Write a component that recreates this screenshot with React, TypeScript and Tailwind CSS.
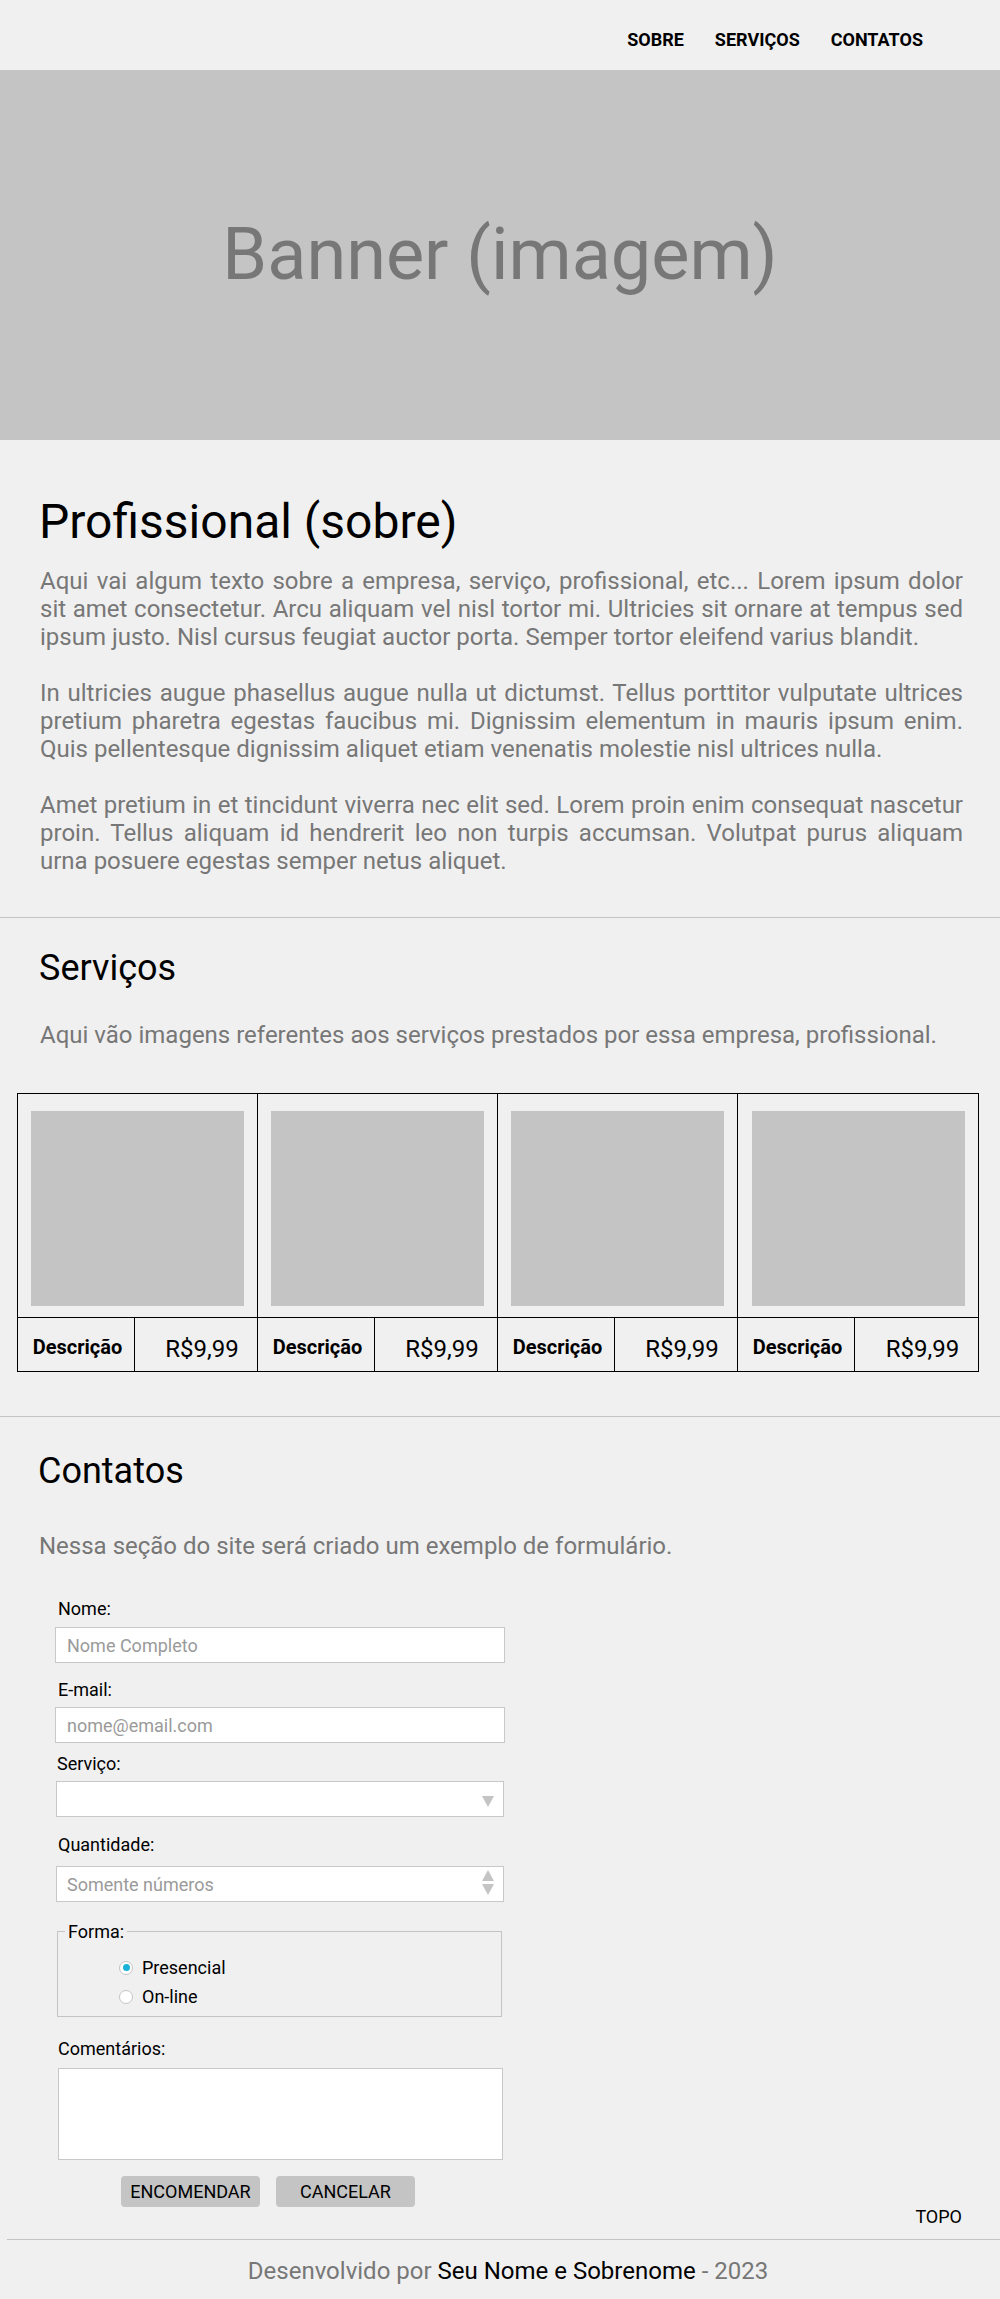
const CARDS = [1, 2, 3, 4];

const PARAGRAPHS = [
  "Aqui vai algum texto sobre a empresa, serviço, profissional, etc... Lorem ipsum dolor sit amet consectetur. Arcu aliquam vel nisl tortor mi. Ultricies sit ornare at tempus sed ipsum justo. Nisl cursus feugiat auctor porta. Semper tortor eleifend varius blandit.",
  "In ultricies augue phasellus augue nulla ut dictumst. Tellus porttitor vulputate ultrices pretium pharetra egestas faucibus mi. Dignissim elementum in mauris ipsum enim. Quis pellentesque dignissim aliquet etiam venenatis molestie nisl ultrices nulla.",
  "Amet pretium in et tincidunt viverra nec elit sed. Lorem proin enim consequat nascetur proin. Tellus aliquam id hendrerit leo non turpis accumsan. Volutpat purus aliquam urna posuere egestas semper netus aliquet.",
];

function Triangle({ up = false }: { up?: boolean }) {
  return (
    <svg width="12" height="11" viewBox="0 0 12 11" className="block">
      {up ? <polygon points="6,0 12,11 0,11" fill="#c4c4c4" /> : <polygon points="0,0 12,0 6,11" fill="#c4c4c4" />}
    </svg>
  );
}

export default function App() {
  return (
    <div className="min-h-[2299px] bg-[#f0f0f0] font-['Roboto','Liberation_Sans',sans-serif] text-black">
      <header className="flex h-[70px] justify-end gap-[31px] pr-[77px] pt-[29px] text-[18px] font-bold leading-[21px]">
        <a href="#sobre">SOBRE</a>
        <a href="#servicos">SERVIÇOS</a>
        <a href="#contatos">CONTATOS</a>
      </header>

      <div className="flex h-[370px] items-center justify-center bg-[#c4c4c4] text-[72px] leading-[84px] text-[#777]">
        Banner (imagem)
      </div>

      <section id="sobre" className="border-b border-[#c4c4c4] pb-[42px] pl-[39px] pr-[37px] pt-[54px]">
        <h1 className="text-[48px] leading-[56px]">Profissional (sobre)</h1>
        <div className="mt-[17px] space-y-[28px] pl-[1px] text-justify text-[24px] leading-[28px] text-[#777]">
          {PARAGRAPHS.map((p, i) => (
            <p key={i}>{p}</p>
          ))}
        </div>
      </section>

      <section id="servicos" className="border-b border-[#c4c4c4] pb-[44px] pt-[29px]">
        <h2 className="pl-[39px] text-[36px] leading-[42px]">Serviços</h2>
        <p className="mt-[32px] pl-[40px] text-[24px] leading-[28px] text-[#777]">
          Aqui vão imagens referentes aos serviços prestados por essa empresa, profissional.
        </p>

        <div className="ml-[17px] mt-[44px] grid w-[962px] grid-cols-4 border border-black">
          {CARDS.map((c) => (
            <div key={c} className="border-r border-black last:border-r-0">
              <div className="flex justify-center pb-[11px] pt-[17px]">
                <div className="h-[195px] w-[213px] bg-[#c4c4c4]" />
              </div>
              <div className="flex h-[54px] border-t border-black">
                <div className="flex w-[117px] items-center justify-center border-r border-black pl-[3px] pt-[5px] text-[20px] font-bold">
                  Descrição
                </div>
                <div className="flex flex-1 items-center justify-center pl-[12px] pt-[9px] text-[24px]">R$9,99</div>
              </div>
            </div>
          ))}
        </div>
      </section>

      <section id="contatos" className="pt-[33px]">
        <h2 className="pl-[38px] text-[36px] leading-[42px]">Contatos</h2>
        <p className="mt-[40px] pl-[39px] text-[24px] leading-[28px] text-[#777]">
          Nessa seção do site será criado um exemplo de formulário.
        </p>

        <form className="mt-[38px] pl-[55px] text-[18px] leading-[21px]" onSubmit={(e) => e.preventDefault()}>
          <label className="block pl-[3px]">Nome:</label>
          <input
            className="mt-[8px] block h-[36px] w-[450px] border border-[#c8c8c8] bg-white px-[11px] text-[18px] outline-none placeholder:text-[#9a9a9a]"
            placeholder="Nome Completo"
          />

          <label className="mt-[16px] block pl-[3px]">E-mail:</label>
          <input
            className="mt-[7px] block h-[36px] w-[450px] border border-[#c8c8c8] bg-white px-[11px] text-[18px] outline-none placeholder:text-[#9a9a9a]"
            placeholder="nome@email.com"
          />

          <label className="mt-[10px] block pl-[2px]">Serviço:</label>
          <div className="relative ml-[1px] mt-[7px] h-[36px] w-[448px] border border-[#c8c8c8] bg-white">
            <select className="h-full w-full appearance-none bg-transparent px-[11px] outline-none" defaultValue="">
              <option value=""></option>
            </select>
            <div className="pointer-events-none absolute right-[9px] top-[14px]">
              <Triangle />
            </div>
          </div>

          <label className="mt-[17px] block pl-[3px]">Quantidade:</label>
          <div className="relative ml-[1px] mt-[11px] h-[36px] w-[448px] border border-[#c8c8c8] bg-white">
            <input
              className="h-full w-full bg-transparent px-[10px] text-[18px] outline-none placeholder:text-[#9a9a9a]"
              placeholder="Somente números"
            />
            <div className="pointer-events-none absolute right-[9px] top-[3px] flex flex-col gap-[3px]">
              <Triangle up />
              <Triangle />
            </div>
          </div>

          <fieldset className="ml-[2px] mt-[19px] w-[445px] border border-[#c4c4c4] px-[7px] pb-[9px]">
            <legend className="px-[3px]">Forma:</legend>
            <div className="mt-[15px] flex flex-col gap-[8px] pl-[54px]">
              <label className="flex h-[21px] items-center gap-[9px]">
                <span className="flex h-[14px] w-[14px] items-center justify-center rounded-full border border-[#c4c4c4] bg-white">
                  <span className="h-[7px] w-[7px] rounded-full bg-[#1ab2d6]" />
                </span>
                Presencial
              </label>
              <label className="flex h-[21px] items-center gap-[9px]">
                <span className="h-[14px] w-[14px] rounded-full border border-[#c4c4c4] bg-white" />
                On-line
              </label>
            </div>
          </fieldset>

          <label className="mt-[21px] block pl-[3px]">Comentários:</label>
          <textarea className="ml-[3px] mt-[9px] block h-[92px] w-[445px] resize-none border border-[#c8c8c8] bg-white outline-none" />

          <div className="ml-[66px] mt-[16px] flex gap-[16px]">
            <button className="h-[31px] w-[139px] rounded-[4px] bg-[#c4c4c4] text-[18px]">ENCOMENDAR</button>
            <button type="button" className="h-[31px] w-[139px] rounded-[4px] bg-[#c4c4c4] text-[18px]">CANCELAR</button>
          </div>
        </form>

        <div className="-mt-[1px] flex justify-end pr-[38px] text-[18px] leading-[21px]">
          <a href="#">TOPO</a>
        </div>
      </section>

      <footer className="ml-[7px] mt-[12px] border-t border-[#c4c4c4] pb-[13px] pl-[9px] pt-[17px] text-center text-[24px] leading-[28px] text-[#777]">
        Desenvolvido por <span className="text-black">Seu Nome e Sobrenome</span> - 2023
      </footer>
    </div>
  );
}
